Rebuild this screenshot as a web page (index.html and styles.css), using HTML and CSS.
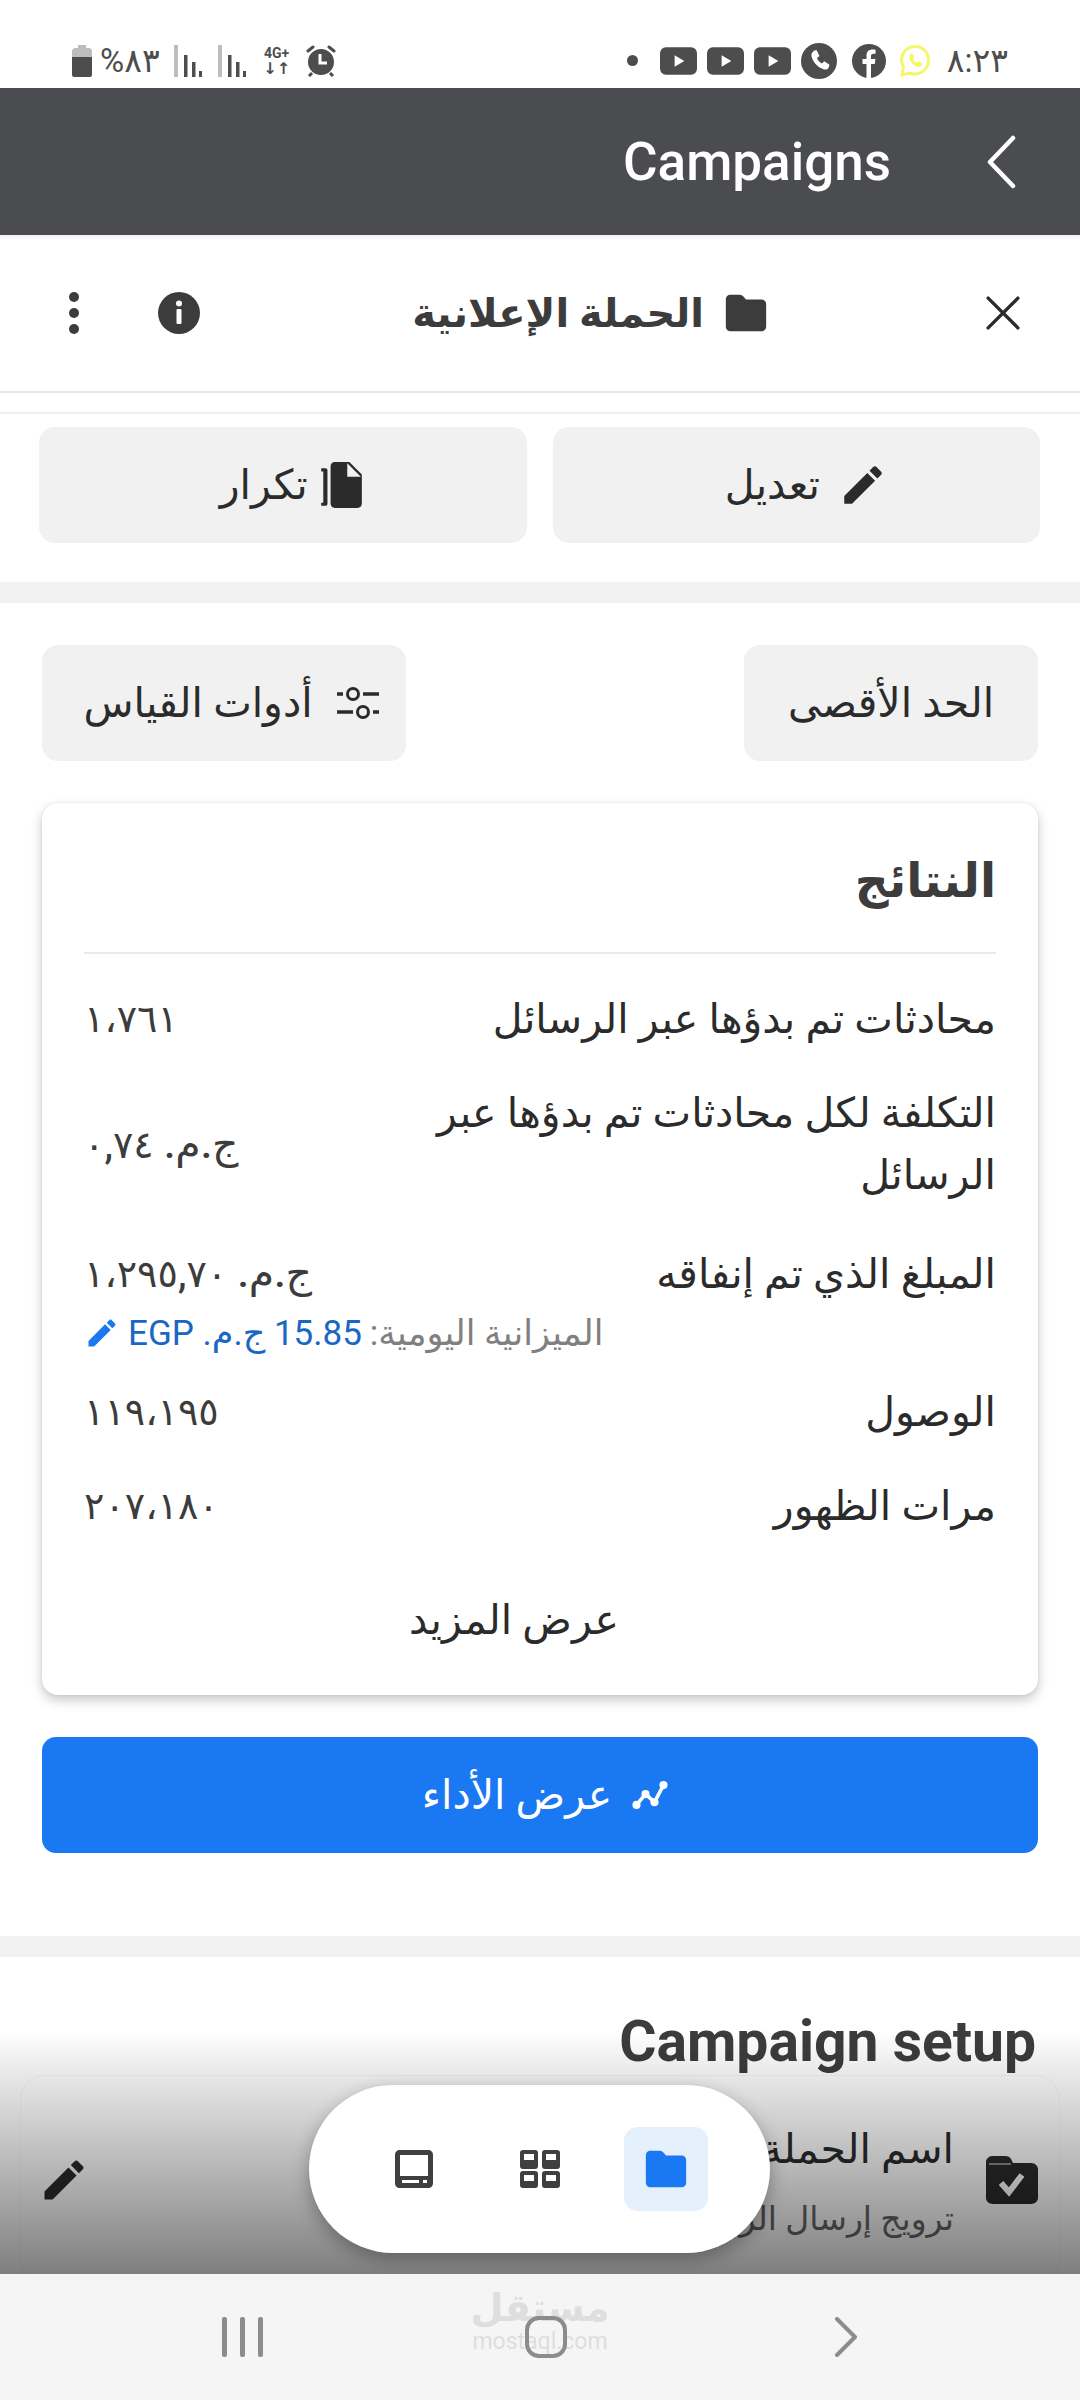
FILE: index.html
```html
<!DOCTYPE html>
<html lang="ar" dir="rtl">

<head>
    <meta charset="UTF-8">
    <title>Campaigns</title>
    <link rel="stylesheet" href="styles.css">
</head>

<body>
    <svg class="sprite" width="0" height="0">
        <symbol id="pencil" viewBox="0 0 24 24"><path d="M3 17.25V21h3.75L17.81 9.94l-3.75-3.75L3 17.25zM20.71 7.04c.39-.39.39-1.02 0-1.41l-2.34-2.34c-.39-.39-1.02-.39-1.41 0l-1.83 1.83 3.75 3.75 1.83-1.83z"/></symbol>
        <symbol id="folder" viewBox="0 0 24 24"><path d="M3.5 2h5c1 0 1.6.5 2.2 1.2L12 4.6h8.5c1.4 0 2.5 1.1 2.5 2.5v12.4c0 1.4-1.1 2.5-2.500 2.500h-17C2.100 22 1 20.900 1 19.500v-15C1 3.100 2.100 2 3.500 2z"/></symbol>
        <symbol id="copy" viewBox="0 0 24 24"><path d="M9 1h7l6 6v14c0 1.100-.9 2-2 2H9c-1.100 0-2-.9-2-2V3c0-1.100.9-2 2-2zM15 1.500V8h6.500zM4.500 4H2.500v1.500h1V20.500h-1V22h2c.6 0 1-.4 1-1V5c0-.6-.4-1-1-1z" fill-rule="evenodd"/></symbol>
    </svg>

    <div class="status-bar" dir="ltr">
        <div class="status-group">
            <svg class="battery" viewBox="0 0 20 32"><path fill="#bdbdbd" d="M6 0h8v3h3c1.500 0 3 1.500 3 3v6H0V6c0-1.500 1.500-3 3-3h3z"/><path fill="#4d4d4d" d="M0 12h20v18c0 1-1 2-2 2H2c-1 0-2-1-2-2z"/></svg>
            <span class="status-text percent">%٨٣</span>
            <svg class="signal" viewBox="0 0 28 32"><rect x="0" y="0" width="4" height="32" fill="#bdbdbd"/><rect x="10" y="10" width="3.500" height="22" fill="#4d4d4d"/><rect x="18" y="17" width="3.500" height="15" fill="#4d4d4d"/><rect x="25" y="26" width="3" height="6" fill="#4d4d4d"/></svg>
            <svg class="signal" viewBox="0 0 28 32"><rect x="0" y="0" width="4" height="32" fill="#bdbdbd"/><rect x="10" y="10" width="3.500" height="22" fill="#4d4d4d"/><rect x="18" y="17" width="3.500" height="15" fill="#4d4d4d"/><rect x="25" y="26" width="3" height="6" fill="#4d4d4d"/></svg>
            <div class="net"><span class="net-label">4G+</span><span class="net-arrows">↓↑</span></div>
            <svg class="alarm" viewBox="0 0 30 32"><circle cx="15" cy="17" r="13" fill="#4d4d4d"/><path d="M2 6l5-4M28 6l-5-4" stroke="#4d4d4d" stroke-width="3" stroke-linecap="round"/><path d="M14 9v9h7" fill="none" stroke="#fff" stroke-width="3"/><path d="M6 28l-3 3M24 28l3 3" stroke="#4d4d4d" stroke-width="3"/></svg>
        </div>
        <div class="status-group notif">
            <span class="notif-dot"></span>
            <svg class="yt" viewBox="0 0 38 28"><rect width="38" height="28" rx="6" fill="#4d4d4d"/><path d="M15 8l10 6-10 6z" fill="#fff"/></svg>
            <svg class="yt" viewBox="0 0 38 28"><rect width="38" height="28" rx="6" fill="#4d4d4d"/><path d="M15 8l10 6-10 6z" fill="#fff"/></svg>
            <svg class="yt" viewBox="0 0 38 28"><rect width="38" height="28" rx="6" fill="#4d4d4d"/><path d="M15 8l10 6-10 6z" fill="#fff"/></svg>
            <svg class="round-icon" viewBox="0 0 36 36"><circle cx="18" cy="18" r="18" fill="#4d4d4d"/><path d="M12 8l3.500-1 3 6-2.500 2c.8 2.500 2.500 4.500 5 5.500l2.200-2.200 5.300 3.500-1 3.200c-1 1.500-3 2-5 1.300-6-2-10.500-7-12-13-.4-2 .3-4 2.500-5.300z" fill="#fff"/></svg>
            <svg class="fb" viewBox="0 0 34 34"><circle cx="17" cy="17" r="17" fill="#4d4d4d"/><path d="M14.500 34V20h-4v-5h4v-3.500c0-4 2.500-6 6-6 1.500 0 3 .2 3 .2v4h-2c-2 0-2.500 1.200-2.500 2.500V15h4.500l-.8 5H19v14z" fill="#fff"/></svg>
            <svg class="wa" viewBox="0 0 32 34"><path d="M16 2.500C8.500 2.500 2.500 8.500 2.500 16c0 2.500.7 5 2 7L3 31l8-2c1.500.6 3.200 1 5 1 7.500 0 13.500-6 13.500-14S23.500 2.500 16 2.500z" fill="#fff" stroke="#f4f76a" stroke-width="3"/><path d="M11 10l2.500-.5 2 4-1.500 1.500c.8 1.800 2 3 3.800 3.800l1.500-1.500 3.700 2-.5 2.500c-2 2-5 1.500-8-1-3-2.500-5.500-6.500-3.500-10.300z" fill="#f4f76a"/></svg>
            <span class="status-text clock">٨:٢٣</span>
        </div>
    </div>

    <header class="app-bar">
        <svg class="back" viewBox="0 0 32 54"><path d="M28 3L5 27l23 24" fill="none" stroke="#fff" stroke-width="4.500" stroke-linecap="round" stroke-linejoin="round"/></svg>
        <h1 class="app-title" dir="ltr">Campaigns</h1>
    </header>

    <div class="panel-head">
        <svg class="close" viewBox="0 0 32 32"><path d="M2 2l28 28M30 2L2 30" stroke="#2b2b2b" stroke-width="3.200" fill="none" stroke-linecap="round"/></svg>
        <div class="panel-title">
            <svg class="panel-folder"><use href="#folder"/></svg>
            <span>الحملة الإعلانية</span>
        </div>
        <svg class="info" viewBox="0 0 42 42"><circle cx="21" cy="21" r="21" fill="#3c3c3c"/><rect x="18.500" y="17" width="5" height="15" rx="1" fill="#fff"/><circle cx="21" cy="11.500" r="3" fill="#fff"/></svg>
        <div class="dots"><i></i><i></i><i></i></div>
    </div>
    <div class="thin-strip"></div>

    <section class="actions">
        <button class="btn">
            <svg class="btn-icon"><use href="#pencil"/></svg>
            <span>تعديل</span>
        </button>
        <button class="btn btn-copy">
            <svg class="btn-icon"><use href="#copy"/></svg>
            <span>تكرار</span>
        </button>
    </section>

    <div class="band"></div>

    <section class="results">
        <div class="tools">
            <button class="btn btn-limit">الحد الأقصى</button>
            <button class="btn btn-metrics">
                <svg class="metrics-icon" viewBox="0 0 42 34"><path d="M0 8h6M26 8h16M0 26h16M36 26h6" stroke="#2b2b2b" stroke-width="3.500"/><circle cx="16" cy="8" r="5.500" fill="none" stroke="#2b2b2b" stroke-width="3"/><circle cx="26" cy="26" r="5.500" fill="none" stroke="#2b2b2b" stroke-width="3"/></svg>
                <span>أدوات القياس</span>
            </button>
        </div>

        <div class="card">
            <h2 class="card-title">النتائج</h2>
            <div class="rows">
                <div class="row">
                    <span class="label">محادثات تم بدؤها عبر الرسائل</span>
                    <bdo class="value digits" dir="ltr">١،٧٦١</bdo>
                </div>
                <div class="row">
                    <span class="label">التكلفة لكل محادثات تم بدؤها عبر الرسائل</span>
                    <span class="value">ج.م. <bdo class="digits" dir="ltr">٠,٧٤</bdo></span>
                </div>
                <div class="spend">
                    <div class="row">
                        <span class="label">المبلغ الذي تم إنفاقه</span>
                        <span class="value">ج.م. <bdo class="digits" dir="ltr">١،٢٩٥,٧٠</bdo></span>
                    </div>
                    <div class="budget">
                        <span class="budget-label">الميزانية اليومية:</span>
                        <span class="budget-amount">15.85 ج.م. EGP</span>
                        <svg class="budget-icon"><use href="#pencil"/></svg>
                    </div>
                </div>
                <div class="row">
                    <span class="label">الوصول</span>
                    <bdo class="value digits" dir="ltr">١١٩،١٩٥</bdo>
                </div>
                <div class="row">
                    <span class="label">مرات الظهور</span>
                    <bdo class="value digits" dir="ltr">٢٠٧،١٨٠</bdo>
                </div>
            </div>
            <div class="more">عرض المزيد</div>
        </div>

        <button class="primary">
            <svg class="primary-icon" viewBox="0 0 40 34"><path d="M5 28l10-12 10 9L35 6" fill="none" stroke="#fff" stroke-width="4"/><circle cx="5" cy="28" r="4.500" fill="#fff"/><circle cx="15" cy="16" r="4.500" fill="#fff"/><circle cx="25" cy="25" r="4.500" fill="#fff"/><circle cx="35" cy="6" r="4.500" fill="#fff"/></svg>
            <span>عرض الأداء</span>
        </button>
    </section>

    <div class="band band-setup"></div>

    <section class="setup">
        <h2 class="setup-title" dir="ltr">Campaign setup</h2>
        <div class="setup-card">
            <svg class="setup-icon" viewBox="0 0 52 48"><path d="M6 0h13c3 0 5 1 6 3l2 4h18c4 0 7 3 7 6v29c0 3-3 6-7 6H7c-4 0-7-3-7-6V6c0-3 3-6 6-6z" fill="#2b2b2b"/><path d="M3 8h22" stroke="#8a8a8a" stroke-width="2"/><path d="M15 27l8 9 13-17" fill="none" stroke="#fff" stroke-width="6"/></svg>
            <div class="setup-text">
                <div class="setup-name">اسم الحملة</div>
                <div class="setup-sub">ترويج إرسال الرسائل</div>
            </div>
            <svg class="setup-edit"><use href="#pencil"/></svg>
        </div>
    </section>

    <div class="scrim"></div>

    <nav class="float-nav" dir="ltr">
        <span class="float-item">
            <svg viewBox="0 0 38 38"><path d="M5 0h28c3 0 5 2 5 5v28c0 3-2 5-5 5H5c-3 0-5-2-5-5V5c0-3 2-5 5-5zM5 5v21h28V5zM7 30v3h17v-3zM28 30v3h4v-3z" fill="#3f3f3f" fill-rule="evenodd"/></svg>
        </span>
        <span class="float-item">
            <svg viewBox="0 0 40 38"><path d="M3 0h12c2 0 3 1 3 3v13c0 2-1 3-3 3H3c-2 0-3-1-3-3V3c0-2 1-3 3-3zM4 4v6h10V4zM25 0h12c2 0 3 1 3 3v13c0 2-1 3-3 3H25c-2 0-3-1-3-3V3c0-2 1-3 3-3zM26 4v6h10V4zM3 21h12c2 0 3 1 3 3v11c0 2-1 3-3 3H3c-2 0-3-1-3-3V24c0-2 1-3 3-3zM4 25v6h10v-6zM25 21h12c2 0 3 1 3 3v11c0 2-1 3-3 3H25c-2 0-3-1-3-3V24c0-2 1-3 3-3zM26 25v6h10v-6z" fill="#3f3f3f" fill-rule="evenodd"/></svg>
        </span>
        <span class="float-item active">
            <svg><use href="#folder"/></svg>
        </span>
    </nav>

    <footer class="sys-nav" dir="ltr">
        <div class="watermark">
            <span class="wm-ar">مستقل</span>
            <span class="wm-en">mostaql.com</span>
        </div>
        <span class="sys-bars"><i></i><i></i><i></i></span>
        <span class="sys-home"></span>
        <svg class="sys-next" viewBox="0 0 24 40"><path d="M3 2l18 18L3 38" fill="none" stroke="#8c8c8c" stroke-width="4" stroke-linecap="round" stroke-linejoin="round"/></svg>
    </footer>
</body>

</html>
```

FILE: styles.css
```css
* {
    box-sizing: border-box;
}

html,
body {
    margin: 0;
    padding: 0;
}

body {
    position: relative;
    width: 1080px;
    height: 2400px;
    overflow: hidden;
    background-color: #fff;
    color: #2b2b2b;
    font-family: Roboto, "Noto Sans", "DejaVu Sans", sans-serif;
}

.sprite {
    position: absolute;
}

button {
    font-family: inherit;
    border: none;
    color: inherit;
}

/* status bar */
.status-bar {
    height: 88px;
    padding: 33px 72px 0;
    display: flex;
    justify-content: space-between;
    align-items: center;
}

.status-group {
    display: flex;
    align-items: center;
}

.status-text {
    font-size: 33px;
    color: #4d4d4d;
    unicode-bidi: bidi-override;
    direction: ltr;
}

.battery {
    width: 20px;
    height: 32px;
}

.percent {
    margin: 0 14px 0 8px;
}

.signal {
    width: 28px;
    height: 32px;
    margin-right: 16px;
}

.net {
    width: 30px;
    margin-right: 14px;
    display: flex;
    flex-direction: column;
    align-items: center;
    color: #4d4d4d;
    font-weight: 700;
}

.net-label {
    font-size: 14px;
    line-height: 16px;
}

.net-arrows {
    font-size: 16px;
    line-height: 16px;
}

.alarm {
    width: 30px;
    height: 32px;
}

.notif {
    gap: 10px;
}

.notif-dot {
    width: 11px;
    height: 11px;
    border-radius: 50%;
    background-color: #4d4d4d;
    margin-right: 12px;
}

.yt {
    width: 37px;
    height: 28px;
}

.round-icon {
    width: 36px;
    height: 36px;
}

.fb {
    width: 34px;
    height: 34px;
    margin-left: 5px;
}

.wa {
    width: 32px;
    height: 34px;
    margin-left: 3px;
}

.clock {
    margin-left: 6px;
}

/* app bar */
.app-bar {
    height: 147px;
    background-color: #4b4c50;
    color: #fff;
    display: flex;
    align-items: center;
    padding-right: 63px;
    gap: 94px;
}

.back {
    width: 32px;
    height: 54px;
}

.app-title {
    margin: 0;
    font-size: 53px;
    font-weight: 500;
}

/* panel head */
.panel-head {
    height: 158px;
    display: flex;
    align-items: center;
    padding: 0 60px 0 69px;
    border-bottom: 2px solid #e8e8e8;
    box-shadow: inset 0 6px 6px -6px rgba(0, 0, 0, 0.12);
}

.close {
    width: 34px;
    height: 34px;
}

.panel-title {
    display: flex;
    align-items: center;
    gap: 20px;
    font-size: 40px;
    font-weight: 700;
    color: #3c3c3c;
    margin-right: 218px;
}

.panel-folder {
    width: 44px;
    height: 44px;
    fill: #3c3c3c;
}

.info {
    width: 42px;
    height: 42px;
    margin-right: auto;
}

.dots {
    margin-right: 79px;
    display: flex;
    flex-direction: column;
    gap: 6px;
}

.dots i {
    width: 10px;
    height: 10px;
    border-radius: 50%;
    background-color: #3c3c3c;
}

.thin-strip {
    height: 21px;
    border-bottom: 2px solid #eee;
}

/* buttons */
.actions {
    padding: 13px 40px 39px 39px;
    display: flex;
    gap: 26px;
}

.btn {
    height: 116px;
    flex: 1;
    padding: 0;
    background-color: #f1f1f1;
    border-radius: 16px;
    font-size: 41px;
    display: flex;
    align-items: center;
    justify-content: center;
    gap: 18px;
}

.actions .btn {
    padding-left: 20px;
}

.actions .btn-copy {
    gap: 8px;
}

.btn-icon {
    width: 50px;
    height: 50px;
    fill: #2b2b2b;
}

.metrics-icon {
    width: 42px;
    height: 34px;
    margin-left: 6px;
}

.band {
    height: 21px;
    background-color: #f2f2f2;
}

.results {
    padding: 42px 42px 0;
}

.tools {
    display: flex;
    justify-content: space-between;
}

.btn-limit {
    flex: none;
    width: 294px;
}

.btn-metrics {
    flex: none;
    width: 364px;
    padding-left: 14px;
}

/* results card */
.card {
    margin-top: 42px;
    height: 892px;
    padding: 0 42px;
    background-color: #fff;
    border-radius: 16px;
    box-shadow: 0 5px 12px rgba(0, 0, 0, 0.22), 0 0 3px rgba(0, 0, 0, 0.08);
}

.card-title {
    margin: 0;
    height: 151px;
    line-height: 156px;
    font-size: 47px;
    font-weight: 700;
    color: #3c3c3c;
    border-bottom: 2px solid #ebebeb;
}

.rows {
    margin-top: 34px;
    display: flex;
    flex-direction: column;
    gap: 32px;
}

.row {
    display: flex;
    justify-content: space-between;
    align-items: center;
    font-size: 41px;
    line-height: 62px;
}

.label {
    width: 590px;
}

.value {
    color: #3c3c3c;
    font-weight: 500;
    white-space: nowrap;
}

.digits {
    font-size: 38px;
    letter-spacing: -2px;
}

.spend {
    margin: 4px 0 -8px;
}

.budget {
    display: flex;
    justify-content: flex-end;
    align-items: center;
    gap: 8px;
    height: 48px;
    margin-top: 4px;
    font-size: 35px;
}

.budget-label {
    color: #808080;
}

.budget-amount {
    color: #1a66c4;
}

.budget-icon {
    width: 36px;
    height: 36px;
    fill: #1a78f2;
}

.more {
    margin-top: 52px;
    padding-right: 52px;
    text-align: center;
    font-size: 41px;
    line-height: 62px;
}

.primary {
    margin-top: 42px;
    width: 100%;
    height: 116px;
    padding: 0 0 0 10px;
    background-color: #1a78f2;
    color: #fff;
    border-radius: 14px;
    font-size: 41px;
    display: flex;
    align-items: center;
    justify-content: center;
    gap: 20px;
}

.primary-icon {
    width: 36px;
    height: 34px;
}

.band-setup {
    margin-top: 83px;
}

/* campaign setup */
.setup {
    padding: 52px 20px 0;
}

.setup-title {
    margin: 0 24px 0 0;
    font-size: 57px;
    line-height: 66px;
    font-weight: 700;
    color: #3c3c3c;
    text-align: right;
}

.setup-card {
    height: 210px;
    border: 1px solid #f6f6f6;
    border-radius: 24px;
    display: flex;
    align-items: center;
    padding: 0 21px 0 17px;
}

.setup-icon {
    width: 52px;
    height: 48px;
}

.setup-text {
    margin-right: 32px;
}

.setup-name {
    font-size: 41px;
    line-height: 62px;
}

.setup-sub {
    margin-top: 15px;
    font-size: 33px;
    line-height: 48px;
    color: #666;
}

.setup-edit {
    margin-right: auto;
    width: 52px;
    height: 52px;
    fill: #2b2b2b;
}

/* bottom overlays */
.scrim {
    position: absolute;
    left: 0;
    right: 0;
    top: 2030px;
    height: 244px;
    background: linear-gradient(to bottom, rgba(0, 0, 0, 0), rgba(0, 0, 0, 0.5));
}

.float-nav {
    position: absolute;
    left: 309px;
    top: 2085px;
    width: 461px;
    height: 168px;
    background-color: #fff;
    border-radius: 84px;
    box-shadow: 0 6px 18px rgba(0, 0, 0, 0.3);
    display: flex;
    justify-content: center;
    align-items: center;
    gap: 42px;
}

.float-item {
    width: 84px;
    height: 84px;
    display: flex;
    align-items: center;
    justify-content: center;
    border-radius: 14px;
}

.float-item svg {
    width: 40px;
    height: 38px;
}

.float-item.active {
    background-color: #e5f0fd;
    fill: #1a78f2;
}

.float-item.active svg {
    width: 44px;
    height: 44px;
}

.sys-nav {
    position: absolute;
    left: 0;
    right: 0;
    bottom: 0;
    height: 126px;
    background-color: #f5f5f5;
    display: flex;
    align-items: center;
    justify-content: space-between;
    padding: 0 222px;
}

.sys-bars {
    display: flex;
    gap: 13px;
}

.sys-bars i {
    width: 5px;
    height: 40px;
    border-radius: 2px;
    background-color: #8c8c8c;
}

.sys-home {
    position: relative;
    z-index: 1;
    width: 42px;
    height: 42px;
    margin-left: -6px;
    border: 4px solid #8c8c8c;
    border-radius: 14px;
}

.sys-next {
    width: 24px;
    height: 40px;
}

.watermark {
    position: absolute;
    left: 474px;
    top: 12px;
    width: 132px;
    display: flex;
    flex-direction: column;
    align-items: center;
    color: #dedede;
}

.wm-ar {
    font-size: 38px;
    line-height: 44px;
    font-weight: 700;
}

.wm-en {
    font-size: 23px;
    line-height: 24px;
}
```
